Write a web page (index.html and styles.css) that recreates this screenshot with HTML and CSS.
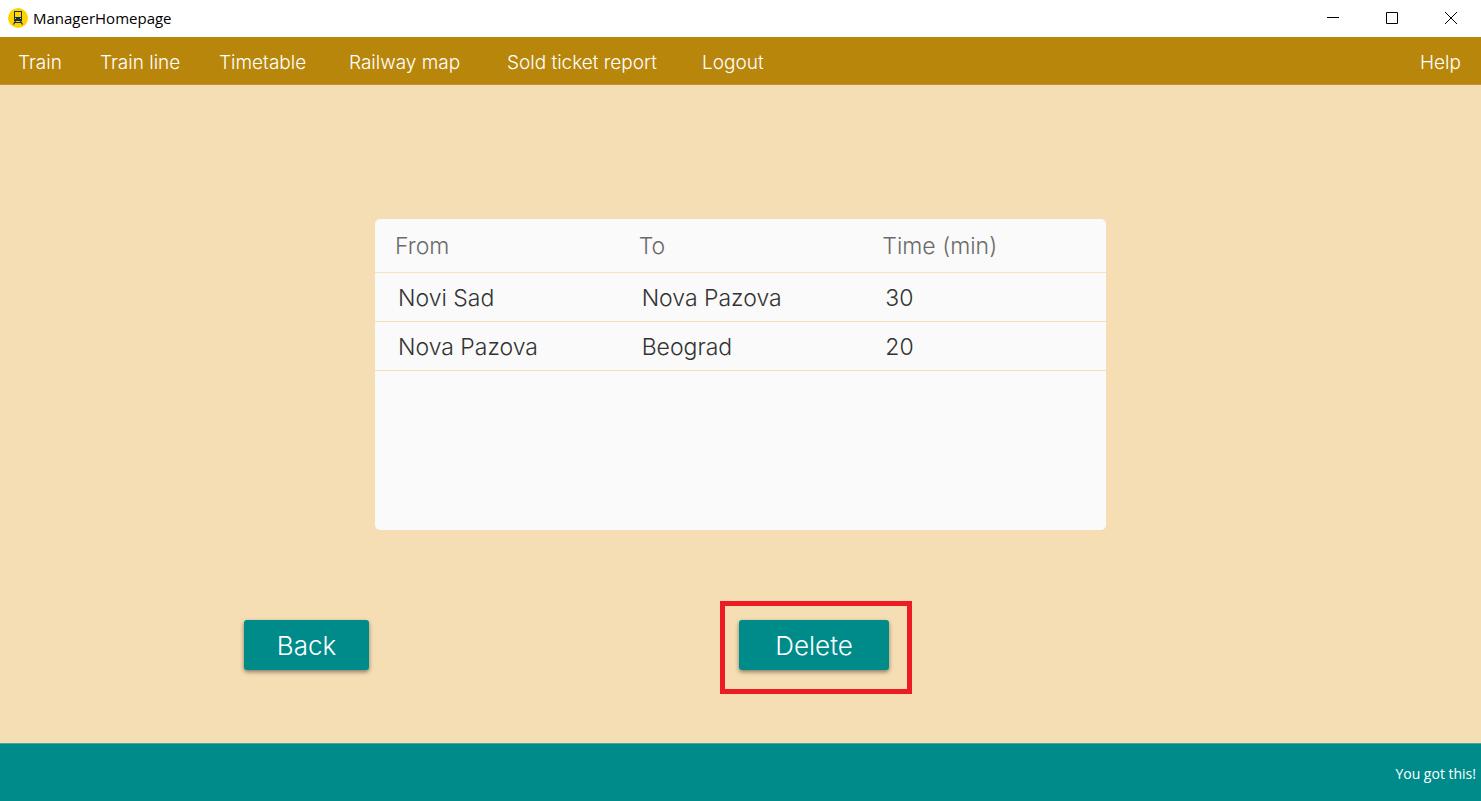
FILE: index.html
```html
<!DOCTYPE html>
<html lang="en">
<head>
<meta charset="utf-8">
<title>ManagerHomepage</title>
<link rel="stylesheet" href="styles.css">
</head>
<body>
<header class="titlebar">
  <svg class="app-icon" width="20" height="20" viewBox="0 0 20 20" aria-hidden="true">
    <circle cx="10" cy="10" r="10" fill="#ffd200"/>
    <path fill="#10304f" fill-rule="evenodd" d="M6 3h8v10H6zM7 4v5h6V4zM7 10v1h1v-1zM12 10v1h1v-1z"/>
    <path d="M7.500 13l-2 3.500M12.500 13l2 3.500M7 14.500h6" stroke="#10304f" stroke-width="1.200" fill="none"/>
  </svg>
  <h1 class="window-title">ManagerHomepage</h1>
  <div class="window-controls">
    <button class="window-button" type="button" aria-label="Minimize"><svg width="12" height="12" viewBox="0 0 12 12"><path d="M0 5.500h12" stroke="#000"/></svg></button>
    <button class="window-button" type="button" aria-label="Maximize"><svg width="12" height="12" viewBox="0 0 12 12"><path d="M.5.500h11v11H.5z" stroke="#000" fill="none"/></svg></button>
    <button class="window-button" type="button" aria-label="Close"><svg width="12" height="12" viewBox="0 0 12 12"><path d="M0 0l12 12M12 0L0 12" stroke="#000"/></svg></button>
  </div>
</header>
<nav class="menu">
  <a class="menu-link" href="#train">Train</a>
  <a class="menu-link" href="#line">Train line</a>
  <a class="menu-link" href="#timetable">Timetable</a>
  <a class="menu-link" href="#map">Railway map</a>
  <a class="menu-link" href="#report">Sold ticket report</a>
  <a class="menu-link" href="#logout">Logout</a>
  <a class="menu-link" href="#help">Help</a>
</nav>
<main class="content">
  <section class="card">
    <table class="routes">
      <thead>
        <tr><th scope="col">From</th><th scope="col">To</th><th scope="col">Time (min)</th></tr>
      </thead>
      <tbody>
        <tr><td>Novi Sad</td><td>Nova Pazova</td><td>30</td></tr>
        <tr><td>Nova Pazova</td><td>Beograd</td><td>20</td></tr>
      </tbody>
    </table>
  </section>
  <div class="actions">
    <button class="action back" type="button">Back</button>
    <button class="action delete" type="button">Delete</button>
  </div>
</main>
<footer class="status">You got this!</footer>
</body>
</html>
```
FILE: styles.css
```css
* { box-sizing: border-box; }
body {
  margin: 0;
  min-height: 100vh;
  display: flex;
  flex-direction: column;
  background: #f5deb3;
  font-family: "Century Gothic", Inter, sans-serif;
}
.titlebar {
  display: flex;
  align-items: center;
  height: 37px;
  padding: 0 1px 1px 8px;
  gap: 5px;
  background: #fff;
}
.window-title {
  margin: 0;
  font: 400 15px "Segoe UI", "Open Sans", sans-serif;
  color: #000;
}
.window-controls { display: flex; align-self: stretch; margin-left: auto; }
.window-button {
  display: grid;
  place-items: center;
  width: 59px;
  padding: 0;
  border: 0;
  background: none;
}
.menu {
  display: grid;
  grid-template-columns: 82px 119px 130px 158px 195px 1fr auto;
  align-items: center;
  height: 48px;
  padding: 3px 20px 0 18px;
  background: #b8860b;
  border-bottom: 1px solid #c8932a;
}
.menu-link { color: #fff; font-size: 19px; font-weight: 300; text-decoration: none; }
.content {
  flex: 1;
  display: flex;
  flex-direction: column;
  justify-content: space-between;
  padding: 134px 0 73px;
}
.card {
  width: 731px;
  max-width: 100%;
  min-height: 311px;
  margin: 0 auto;
  background: #fafafa;
  border-radius: 5px;
}
.routes {
  width: 100%;
  table-layout: fixed;
  border-collapse: separate;
  border-spacing: 0;
  font-size: 23px;
  line-height: 28px;
  font-weight: 300;
  text-align: left;
}
.routes th { padding: 13px 20px 12px; font-weight: 300; color: #6b6b6b; border-bottom: 1px solid #f6e2bd; }
.routes td { padding: 11px 23px 9px; color: #333; border-bottom: 1px solid #f5deb3; }
.actions { display: grid; grid-template-columns: 244fr auto 370fr auto 592fr; }
.action {
  position: relative;
  height: 50px;
  padding: 0;
  border: 0;
  border-radius: 3px;
  background: #008b8b;
  color: #fff;
  font-family: inherit;
  font-size: 26px;
  font-weight: 300;
  box-shadow: 0 2px 4px rgb(0 0 0 / 45%);
}
.back { grid-column: 2; width: 125px; }
.delete { grid-column: 4; width: 150px; }
.delete::after {
  content: "";
  position: absolute;
  inset: -19px -23px -24px -19px;
  border: 5px solid #ed1c24;
}
.status {
  display: flex;
  align-items: center;
  justify-content: flex-end;
  height: 58px;
  padding: 2px 5px 0 0;
  border-top: 1px solid #4aa596;
  background: #008b8b;
  color: #fff;
  font: 400 14px "Segoe UI", "Open Sans", sans-serif;
}
```
